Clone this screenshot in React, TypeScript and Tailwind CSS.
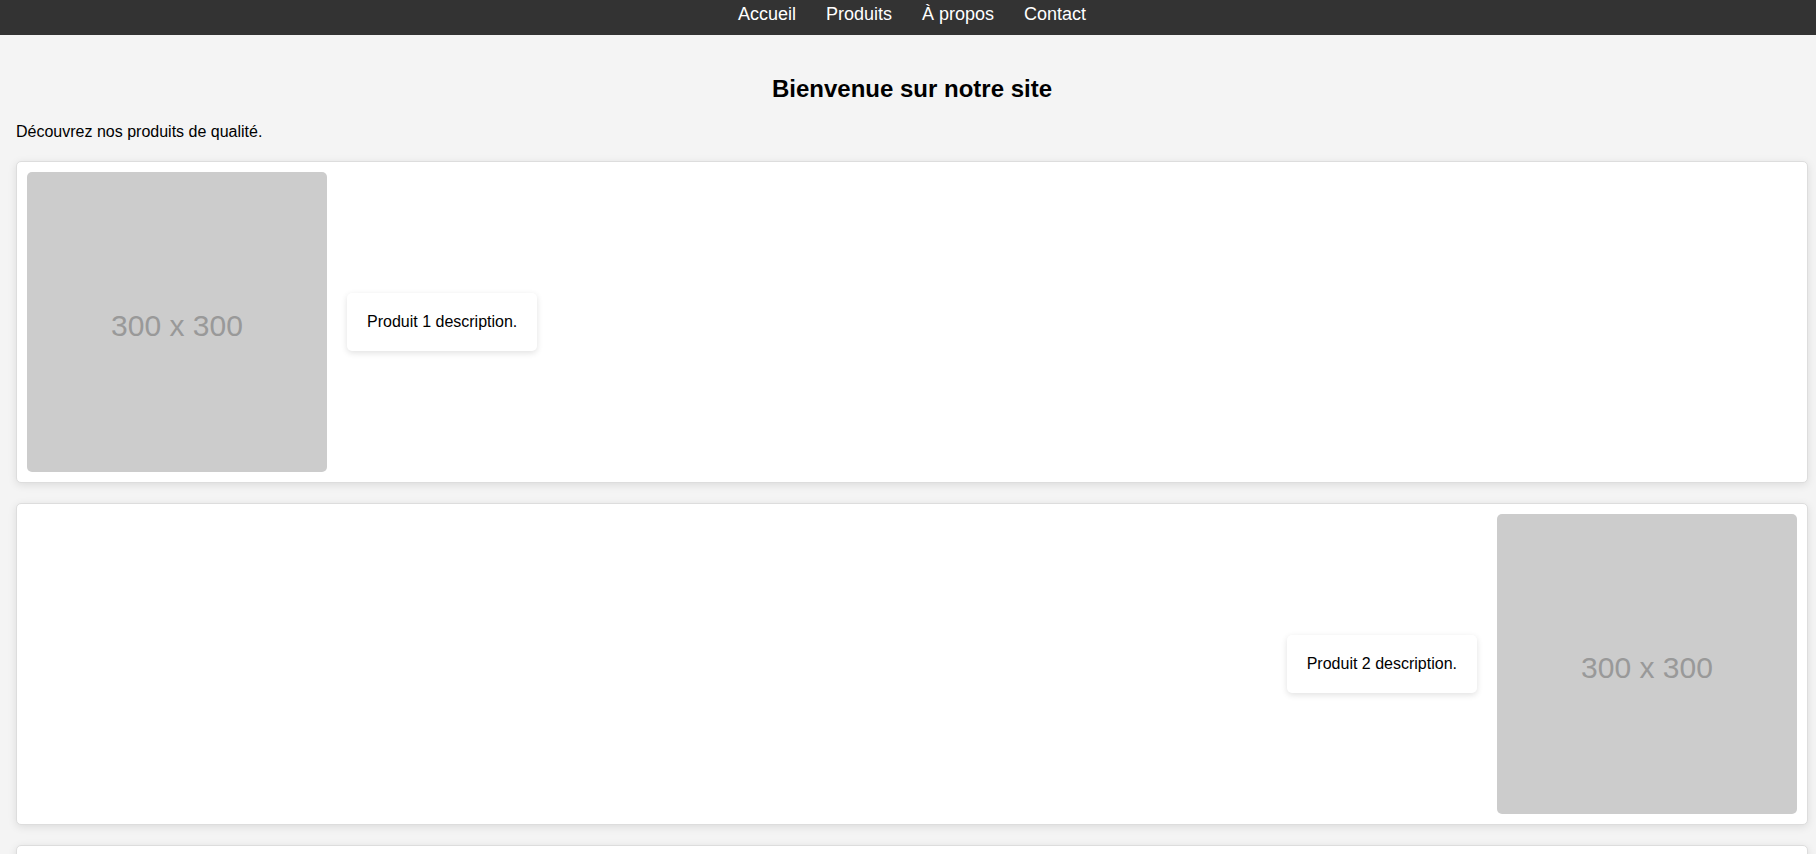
import React from "react";

function Placeholder() {
  return (
    <div className="w-[300px] h-[300px] shrink-0 bg-[#cccccc] rounded-[5px] flex items-center justify-center pt-[7px] text-[30px] leading-[normal] text-[#999999]">
      300 x 300
    </div>
  );
}

function Desc({ children }: { children: React.ReactNode }) {
  return (
    <div className="bg-white p-[20px] rounded-[5px] shadow-[0_2px_6px_rgba(0,0,0,0.12)] text-[16px] leading-[normal] text-black">
      {children}
    </div>
  );
}

export default function App() {
  const products = [1, 2, 3];
  return (
    <div className="min-h-screen bg-[#f4f4f4] font-['Liberation_Sans',Arial,sans-serif] text-black">
      <nav className="h-[35px] bg-[#333333] flex justify-center pl-[8px]">
        {["Accueil", "Produits", "À propos", "Contact"].map((l) => (
          <a key={l} href="#" className="px-[15px] pt-[1px] text-[18px] leading-[27px] text-white">
            {l}
          </a>
        ))}
      </nav>
      <main className="pl-[16px] pr-[8px] pt-[20px] pb-[20px]">
        <h2 className="mt-[20px] mb-[20px] text-center text-[24px] font-bold leading-[normal]">
          Bienvenue sur notre site
        </h2>
        <p className="mb-[20px] text-[16px] leading-[normal]">Découvrez nos produits de qualité.</p>
        {products.map((n) => (
          <div
            key={n}
            className={`mb-[20px] bg-white border border-[#dddddd] rounded-[5px] p-[10px] flex items-center gap-[20px] shadow-[0_2px_8px_rgba(0,0,0,0.1)] ${
              n % 2 === 0 ? "justify-end" : "justify-start"
            }`}
          >
            {n % 2 === 0 ? (
              <>
                <Desc>Produit {n} description.</Desc>
                <Placeholder />
              </>
            ) : (
              <>
                <Placeholder />
                <Desc>Produit {n} description.</Desc>
              </>
            )}
          </div>
        ))}
      </main>
    </div>
  );
}
